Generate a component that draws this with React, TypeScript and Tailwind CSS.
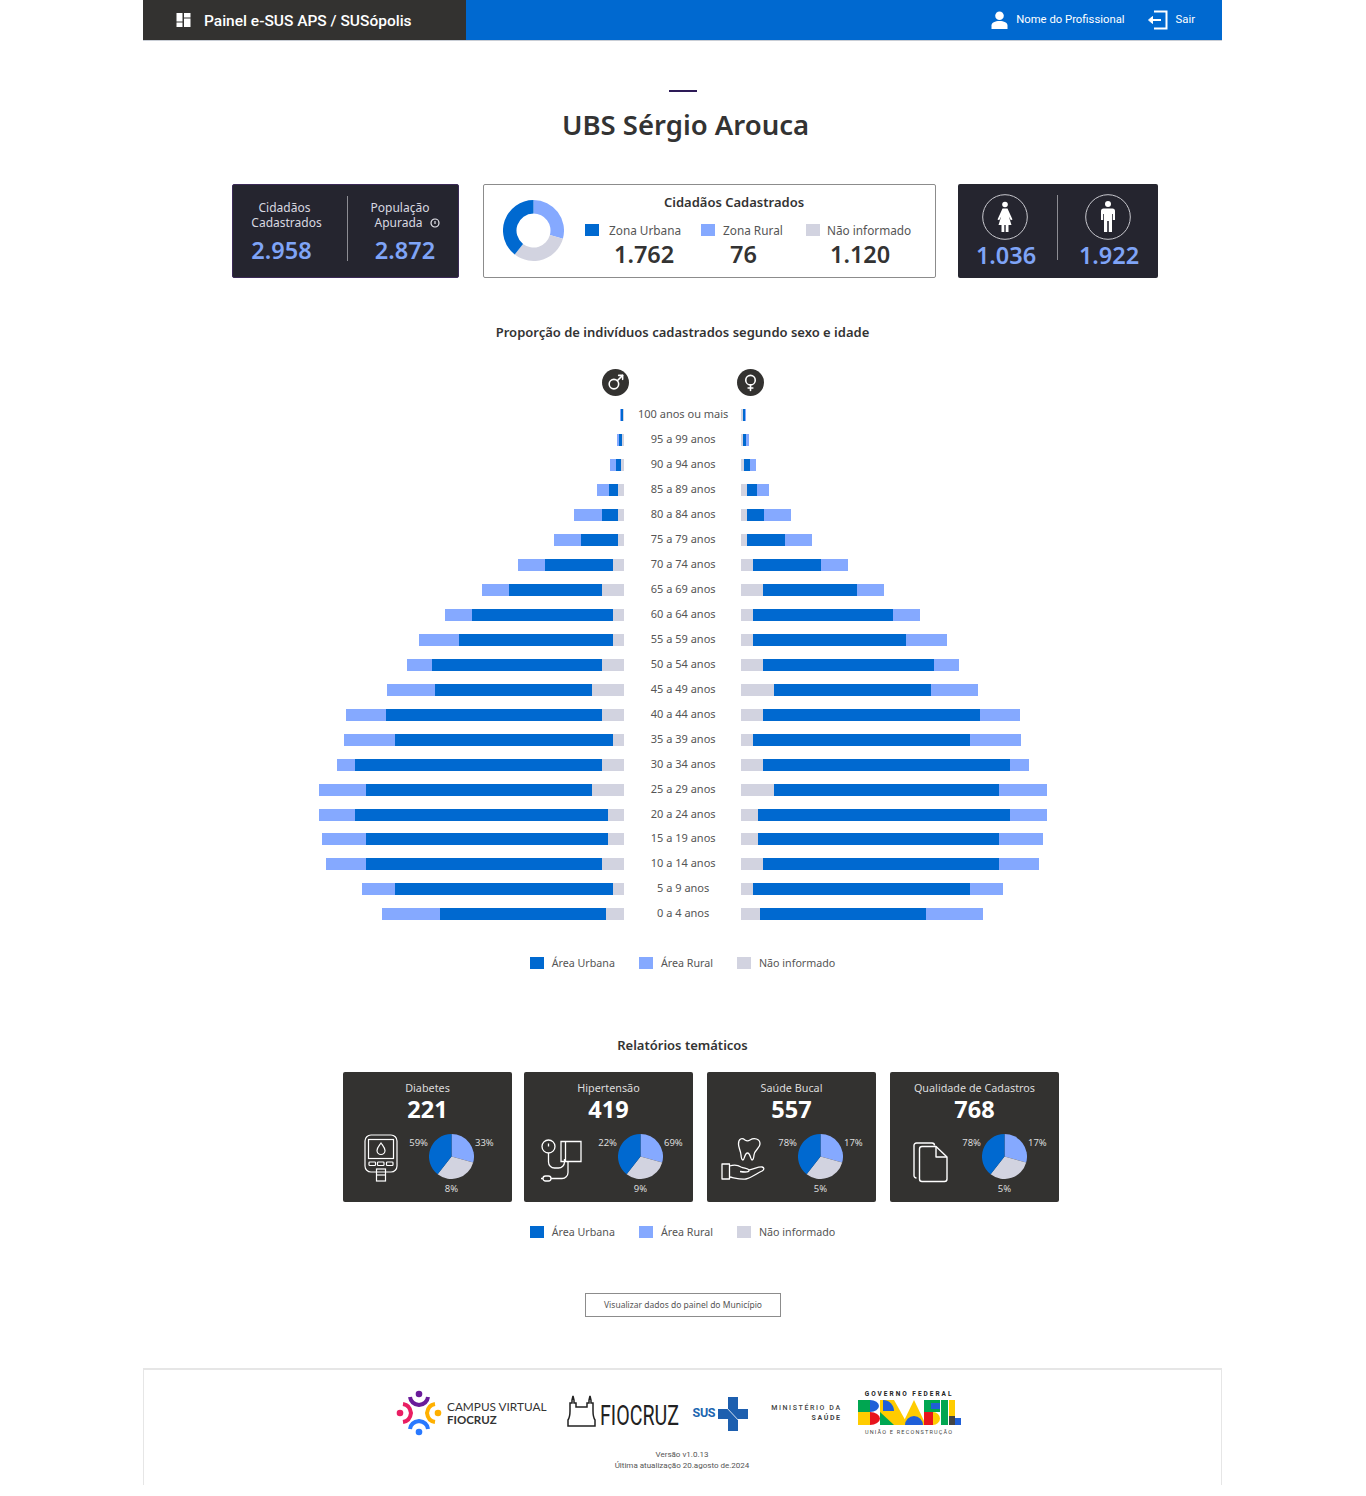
import { Mars, Venus } from "lucide-react";

// largura em px de cada faixa. m: [rural, urbana, não informado] / f: [não informado, urbana, rural]
const faixas: { label: string; m: number[]; f: number[] }[] = [
  { label: "100 anos ou mais", m: [0.7, 1.7, 1.7], f: [1.7, 2, 1] },
  { label: "95 a 99 anos", m: [2.7, 3, 2], f: [2, 3, 3] },
  { label: "90 a 94 anos", m: [6, 5.3, 3], f: [3.3, 5.3, 6] },
  { label: "85 a 89 anos", m: [11.7, 9.7, 6], f: [6, 10, 11.7] },
  { label: "80 a 84 anos", m: [27.3, 16.7, 6], f: [6, 17, 27] },
  { label: "75 a 79 anos", m: [26.7, 37.7, 6], f: [6, 38, 27] },
  { label: "70 a 74 anos", m: [27, 67.7, 11.7], f: [11.7, 68.3, 27] },
  { label: "65 a 69 anos", m: [27, 93.3, 22], f: [22.3, 93.7, 26.7] },
  { label: "60 a 64 anos", m: [27, 140.3, 11.7], f: [11.7, 140.7, 27] },
  { label: "55 a 59 anos", m: [40.3, 153.3, 11.7], f: [11.7, 153.7, 40.3] },
  { label: "50 a 54 anos", m: [24.7, 170.7, 22], f: [22.3, 170.7, 24.7] },
  { label: "45 a 49 anos", m: [47.7, 156.7, 32.7], f: [33, 157, 47.3] },
  { label: "40 a 44 anos", m: [40, 216.3, 22], f: [22.3, 216.7, 39.7] },
  { label: "35 a 39 anos", m: [51.3, 217.3, 11.7], f: [11.7, 217.7, 51] },
  { label: "30 a 34 anos", m: [18.3, 247, 22], f: [22.3, 246.7, 18.7] },
  { label: "25 a 29 anos", m: [47.3, 225.3, 32.7], f: [33, 225.3, 47.3] },
  { label: "20 a 24 anos", m: [36.3, 252.3, 16.7], f: [16.7, 252.3, 36.7] },
  { label: "15 a 19 anos", m: [44, 241.3, 16.7], f: [16.7, 241.7, 44] },
  { label: "10 a 14 anos", m: [40, 236, 22], f: [22.3, 236, 40] },
  { label: "5 a 9 anos", m: [33.3, 217.3, 11.7], f: [11.7, 217.7, 33] },
  { label: "0 a 4 anos", m: [57.7, 165.7, 18.7], f: [19, 165.7, 57.7] },
];

function polar(r: number, deg: number) {
  const a = ((deg - 90) * Math.PI) / 180;
  return `${(r * Math.cos(a)).toFixed(2)} ${(r * Math.sin(a)).toFixed(2)}`;
}

function Pie({ size, hole = 0 }: { size: number; hole?: number }) {
  const r = size / 2;
  const fatias = [
    { de: 0, ate: 105.5, cor: "#85A9FF" },
    { de: 105.5, ate: 218, cor: "#D2D3E0" },
    { de: 218, ate: 360, cor: "#0069D0" },
  ];
  return (
    <svg width={size} height={size} viewBox={`${-r} ${-r} ${size} ${size}`} className="block shrink-0">
      {fatias.map((s) => (
        <path
          key={s.de}
          fill={s.cor}
          d={
            hole
              ? `M${polar(r, s.de)} A${r} ${r} 0 ${s.ate - s.de > 180 ? 1 : 0} 1 ${polar(r, s.ate)} L${polar(hole, s.ate)} A${hole} ${hole} 0 0 0 ${polar(hole, s.de)} Z`
              : `M0 0 L${polar(r, s.de)} A${r} ${r} 0 0 1 ${polar(r, s.ate)} Z`
          }
        />
      ))}
    </svg>
  );
}

function Legenda({ className }: { className: string }) {
  return (
    <div className={`flex justify-center gap-6 text-[10.7px] leading-4 text-[#555] ${className}`}>
      <span className="flex items-center gap-2">
        <i className="block w-[14px] h-3 bg-[#0069D0]" />
        Área Urbana
      </span>
      <span className="flex items-center gap-2">
        <i className="block w-[14px] h-3 bg-[#85A9FF]" />
        Área Rural
      </span>
      <span className="flex items-center gap-2">
        <i className="block w-[14px] h-3 bg-[#D2D3E0]" />
        Não informado
      </span>
    </div>
  );
}

function IconeGlicosimetro() {
  return (
    <svg width="34" height="48" viewBox="0 0 34 48" fill="none" stroke="#fff" strokeWidth="1.2">
      <rect x="1" y="1" width="32" height="37" rx="6" />
      <rect x="4.5" y="5.5" width="25" height="19" />
      <path d="M17 9 C14.5 12.5 13 14 13 16.5 a4 4 0 0 0 8 0 C21 14 19.5 12.5 17 9Z" />
      <rect x="5" y="28" width="6.5" height="3.5" rx="0.8" />
      <rect x="13.5" y="28" width="6.5" height="3.5" rx="0.8" />
      <rect x="22.5" y="28" width="6.5" height="3.5" rx="0.8" />
      <rect x="12.5" y="35" width="9" height="12" />
      <path d="M12.5 41 h9" />
    </svg>
  );
}

function IconeTensiometro() {
  return (
    <svg width="41" height="43" viewBox="0 0 41 43" fill="none" stroke="#fff" strokeWidth="1.3">
      <circle cx="7.5" cy="7.5" r="6.5" />
      <path d="M7.5 4.5 v3" />
      <path d="M7.5 14 v9 a6 6 0 0 0 6 6 h4 a6 6 0 0 0 6 -6 v-3" />
      <path d="M20 2.5 h20 v20 h-20 Z M24.5 2.5 v20" />
      <path d="M27 22.5 v11 a6 6 0 0 1 -6 6 h-11" />
      <rect x="2" y="37" width="8" height="5" rx="2.5" />
      <path d="M0 39.5 h2" />
    </svg>
  );
}

function IconeDente() {
  return (
    <svg width="44" height="46" viewBox="0 0 44 46" fill="none" stroke="#fff" strokeWidth="1.3" strokeLinejoin="round">
      <path d="M24 3 C21 0.5 17.5 1.5 17.5 7 C17.5 11 19.5 13 20 18 C20.3 22 21 23 22 23 C23.5 23 23.5 16 26.5 16 C29.5 16 29.5 23 31 23 C32 23 32.7 22 33 18 C33.5 13 39 11 39 7 C39 1.5 33 0.5 29 3 C27.5 4 25.5 4 24 3Z" />
      <path d="M1 27 h7.5 v15 h-7.5 Z" />
      <path d="M8.5 29 C14 27 17 28 20 30 C23 31.5 27 31 28 33 C28.5 35 25 35.5 19 34.5 M28 33 C33 32 38 29.5 41 30 C43.5 30.5 43.5 32.5 41 34 C35 37 30 41 25 42 C20 43 14 41 8.5 40" />
    </svg>
  );
}

function IconeDocumentos() {
  return (
    <svg width="35" height="41" viewBox="0 0 35 41" fill="none" stroke="#fff" strokeWidth="1.4" strokeLinejoin="round">
      <path d="M3.5 36 C2 36 1 35 1 33.5 V3.5 C1 2 2 1 3.5 1 H19 C20.5 1 21.5 2 21.5 3.5" />
      <path d="M6.5 7 C6.5 5.5 7.5 4.5 9 4.5 H23 L34 15 V37 C34 38.5 33 39.5 31.5 39.5 H9 C7.5 39.5 6.5 38.5 6.5 37Z" />
      <path d="M23 4.5 V15 H34" />
    </svg>
  );
}

const relatorios = [
  { titulo: "Diabetes", total: "221", p: ["59%", "33%", "8%"], icone: <IconeGlicosimetro />, box: "w-[86px] pl-[21px]", card: "" },
  { titulo: "Hipertensão", total: "419", p: ["22%", "69%", "9%"], icone: <IconeTensiometro />, box: "w-[94px] pl-[17px] pt-[5px]", card: "ml-[12px]" },
  { titulo: "Saúde Bucal", total: "557", p: ["78%", "17%", "5%"], icone: <IconeDente />, box: "w-[91px] pl-[14px] pt-[3px]", card: "ml-[14px]" },
  { titulo: "Qualidade de Cadastros", total: "768", p: ["78%", "17%", "5%"], icone: <IconeDocumentos />, box: "w-[92px] pl-[23px] pt-[8px]", card: "ml-[14px]" },
];

export default function App() {
  return (
    <div className="min-h-[1496px] bg-white font-['Noto_Sans',sans-serif] text-[#333]">
      <div className="w-[1079px] ml-[143px]">
        {/* Header */}
        <header className="flex h-10 shadow-[0_1px_0_#c9ced6] font-['Roboto',sans-serif]">
          <div className="flex items-center w-[323px] bg-[#333230] pl-[33px] text-white">
            <svg width="15" height="15" viewBox="0 0 15 15" fill="#fff" className="mr-[13px] mt-[1px]">
              <rect x="0.5" y="0" width="6" height="8.5" />
              <rect x="0.5" y="9.5" width="6" height="4.5" />
              <rect x="8" y="0" width="6.5" height="4.5" />
              <rect x="8" y="5.5" width="6.5" height="8.5" />
            </svg>
            <span className="pt-[3px] text-[15.5px] font-medium leading-none">Painel e-SUS APS / SUSópolis</span>
          </div>
          <div className="flex flex-1 items-center justify-end bg-[#0069D0] pr-[27px] text-white text-[11.3px]">
            <svg width="17" height="18" viewBox="0 0 17 18" fill="#fff" className="mr-[8px]">
              <circle cx="8.5" cy="4.8" r="4.3" />
              <path d="M0.5 18 V14.5 C0.5 11.5 4 10 8.5 10 C13 10 16.5 11.5 16.5 14.5 V18 Z" />
            </svg>
            <span className="pt-[1px]">Nome do Profissional</span>
            <svg width="21" height="20" viewBox="0 0 21 20" fill="none" stroke="#fff" strokeWidth="2" className="ml-[22px] mr-[8px]">
              <path d="M7 1.5 H19.5 V18.5 H7" />
              <path d="M14 10 H3" />
              <path d="M5.5 6.5 L1.5 10 L5.5 13.5 Z" fill="#fff" strokeWidth="1" />
            </svg>
            <span className="pt-[1px]">Sair</span>
          </div>
        </header>

        {/* Titulo */}
        <div className="mt-[50px] ml-[526px] w-[28px] h-[2px] bg-[#2D1A57]" />
        <h1 className="mt-[15px] text-center text-[27.5px] leading-9 font-semibold ml-[6px]">UBS Sérgio Arouca</h1>

        {/* Indicadores */}
        <section className="flex mt-[41px] ml-[89px] h-[94px]">
          <div className="flex w-[227px] rounded-[2px] border border-[#3b2a57] bg-[#25252F] text-[#d8d8e0] pt-[11px]">
            <div className="w-[114px] pr-[7px] pt-[4px] text-[12px] leading-[15px] text-center">
              <p className="pr-[4px]">Cidadãos</p>
              <p>Cadastrados</p>
              <p className="mt-[4px] text-[23.5px] leading-8 font-semibold text-[#7FA4F7] pr-[10px]">2.958</p>
            </div>
            <div className="w-px h-[65px] bg-[#8d8d93]" />
            <div className="flex-1 pt-[4px] text-[12px] leading-[15px] text-center pr-[6px]">
              <p>População</p>
              <p className="flex items-center justify-center pl-[14px]">
                Apurada
                <svg width="10" height="10" viewBox="0 0 10 10" fill="none" stroke="#e8e8ee" className="ml-[7px]">
                  <circle cx="5" cy="5" r="4" strokeWidth="1.2" />
                  <path d="M5 3 v3" strokeWidth="1.2" />
                </svg>
              </p>
              <p className="mt-[4px] text-[23.5px] leading-8 font-semibold text-[#7FA4F7] pl-[10px]">2.872</p>
            </div>
          </div>

          <div className="flex ml-[24px] w-[453px] rounded-[2px] border border-[#8c8c8c] pl-[19px]">
            <div className="mt-[15px]">
              <Pie size={61} hole={17} />
            </div>
            <div className="ml-[21px] flex-1">
              <p className="mt-[8px] text-center text-[13px] leading-[18px] font-semibold pr-[52px]">Cidadãos Cadastrados</p>
              <div className="flex mt-[10px] text-[11.8px] leading-[18px] text-[#555]">
                <div className="w-[116px]">
                  <p className="flex items-center gap-[10px]"><i className="block w-[14px] h-3 bg-[#0069D0]" />Zona Urbana</p>
                  <p className="mt-[-1px] pl-[29px] text-[23.5px] leading-8 font-semibold text-[#333]">1.762</p>
                </div>
                <div className="w-[105px]">
                  <p className="flex items-center gap-[8px]"><i className="block w-[14px] h-3 bg-[#85A9FF]" />Zona Rural</p>
                  <p className="mt-[-1px] pl-[29px] text-[23.5px] leading-8 font-semibold text-[#333]">76</p>
                </div>
                <div>
                  <p className="flex items-center gap-[7px]"><i className="block w-[14px] h-3 bg-[#D2D3E0]" />Não informado</p>
                  <p className="mt-[-1px] pl-[24px] text-[23.5px] leading-8 font-semibold text-[#333]">1.120</p>
                </div>
              </div>
            </div>
          </div>

          <div className="flex ml-[22px] w-[200px] rounded-[2px] bg-[#25252F] pt-[10px]">
            <div className="flex flex-col items-center w-[101px] pr-[5px]">
              <svg width="46" height="46" viewBox="-23 -23 46 46" className="shrink-0">
                <circle r="22.3" fill="none" stroke="#c9c9cf" strokeWidth="1" />
                <circle cy="-12.5" r="2.8" fill="#fff" />
                <path d="M-2.5 -8.5 H2.5 L7.5 2.5 L5.8 3.2 L3.8 -0.5 L6.5 8 H3.5 V15 H0.7 V8 H-0.7 V15 H-3.5 V8 H-6.5 L-3.8 -0.5 L-5.8 3.2 L-7.5 2.5 Z" fill="#fff" />
              </svg>
              <p className="mt-[-1px] ml-[2px] text-[23.5px] leading-8 font-semibold text-[#7FA4F7]">1.036</p>
            </div>
            <div className="mt-[1px] w-px h-[65px] bg-[#8d8d93]" />
            <div className="flex flex-col items-center w-[102px]">
              <svg width="46" height="46" viewBox="-23 -23 46 46" className="shrink-0">
                <circle r="22.3" fill="none" stroke="#c9c9cf" strokeWidth="1" />
                <circle cy="-13" r="3" fill="#fff" />
                <path d="M-4.5 -8.5 H4.5 Q7 -8.5 7 -6 V3 H4.8 V-3 H4 V15 H0.8 V4 H-0.8 V15 H-4 V-3 H-4.8 V3 H-7 V-6 Q-7 -8.5 -4.5 -8.5 Z" fill="#fff" />
              </svg>
              <p className="mt-[-1px] ml-[2px] text-[23.5px] leading-8 font-semibold text-[#7FA4F7]">1.922</p>
            </div>
          </div>
        </section>

        {/* Piramide */}
        <h2 className="mt-[45px] text-center text-[13px] leading-[18px] font-semibold">Proporção de indivíduos cadastrados segundo sexo e idade</h2>
        <div className="flex mt-[28px] ml-[459px]">
          <span className="flex items-center justify-center w-[27px] h-[27px] rounded-full bg-[#333230] text-white">
            <Mars size={19} strokeWidth={2} />
          </span>
          <span className="flex items-center justify-center ml-[108px] w-[27px] h-[27px] rounded-full bg-[#333230] text-white">
            <Venus size={19} strokeWidth={2} />
          </span>
        </div>
        <div className="mt-[6px] ml-[175px]">
          {faixas.map((f) => (
            <div key={f.label} className="flex h-[24.97px]">
              <div className="flex justify-end w-[306.4px] pt-[7px]">
                <i className="block h-3 bg-[#85A9FF]" style={{ width: f.m[0] }} />
                <i className="block h-3 bg-[#0069D0]" style={{ width: f.m[1] }} />
                <i className="block h-3 bg-[#D2D3E0]" style={{ width: f.m[2] }} />
              </div>
              <div className="w-[116.6px] pl-[1px] text-center text-[11px] leading-[24px] text-[#555] whitespace-nowrap">{f.label}</div>
              <div className="flex pt-[7px]">
                <i className="block h-3 bg-[#D2D3E0]" style={{ width: f.f[0] }} />
                <i className="block h-3 bg-[#0069D0]" style={{ width: f.f[1] }} />
                <i className="block h-3 bg-[#85A9FF]" style={{ width: f.f[2] }} />
              </div>
            </div>
          ))}
        </div>
        <Legenda className="mt-[28.6px]" />

        {/* Relatorios */}
        <h2 className="mt-[65px] text-center text-[13px] leading-[18px] font-semibold">Relatórios temáticos</h2>
        <div className="flex mt-[18px] ml-[200px]">
          {relatorios.map((r) => (
            <div key={r.titulo} className={`w-[169px] h-[130px] rounded-[2px] bg-[#333230] text-center text-white ${r.card}`}>
              <p className="mt-[8px] text-[10.8px] leading-[15px] text-[#dcdcdc]">{r.titulo}</p>
              <p className="text-[23.5px] leading-[29px] font-bold">{r.total}</p>
              <div className="flex mt-[10px]">
                <div className={`shrink-0 text-left ${r.box}`}>{r.icone}</div>
                <div className="relative">
                  <Pie size={45} />
                  <span className="absolute right-[46px] top-[3px] text-[9.5px] leading-3 text-[#dcdcdc]">{r.p[0]}</span>
                  <span className="absolute left-[46px] top-[3px] text-[9.5px] leading-3 text-[#dcdcdc]">{r.p[1]}</span>
                  <span className="absolute left-0 w-[45px] top-[49px] text-[9.5px] leading-3 text-[#dcdcdc]">{r.p[2]}</span>
                </div>
              </div>
            </div>
          ))}
        </div>
        <Legenda className="mt-[22px]" />

        <button className="block mt-[53px] ml-[442px] w-[196px] h-6 border border-[#8c8c8c] pt-[1px] text-[8.5px] text-[#555]">
          Visualizar dados do painel do Município
        </button>

        {/* Rodape */}
        <footer className="mt-[51px] h-[117px] border-x border-t-2 border-[#e6e6e6] font-['Roboto',sans-serif]">
          <div className="flex items-center h-[50px] mt-[18px] ml-[252px]">
            <svg width="46" height="46" viewBox="0 0 46 46" fill="none" strokeWidth="4" className="block shrink-0">
              <circle cx="23" cy="4" r="3.3" fill="#6A1B9A" />
              <path d="M14 7 Q15 14 23 15 Q31 14 32 7" stroke="#6A1B9A" />
              <circle cx="42" cy="23" r="3.3" fill="#FFB000" />
              <path d="M39 14 Q32 15 31 23 Q32 31 39 32" stroke="#FFB000" />
              <circle cx="23" cy="42" r="3.3" fill="#2979FF" />
              <path d="M14 39 Q15 32 23 31 Q31 32 32 39" stroke="#2979FF" />
              <circle cx="4" cy="23" r="3.3" fill="#E91E63" />
              <path d="M7 14 Q14 15 15 23 Q14 31 7 32" stroke="#E91E63" />
            </svg>
            <div className="ml-[5px] mt-[1px] text-[#333] font-['Lato',sans-serif]">
              <p className="text-[11.8px] leading-[13px] whitespace-nowrap">CAMPUS VIRTUAL</p>
              <p className="text-[11.5px] leading-[13px] font-bold">FIOCRUZ</p>
            </div>
            <svg width="30" height="36" viewBox="0 0 30 36" className="ml-[21px] block shrink-0">
              <path
                d="M1 31 H28 V25 Q26 22 26 16 V8 H24 V5 L23 1 L22 5 V8 H20 V12 H9 V8 H7 V5 L6 1 L5 5 V8 H3 V16 Q3 22 1 25 Z"
                fill="none"
                stroke="#222"
                strokeWidth="1.5"
              />
            </svg>
            <span className="block w-[79px] ml-[3px] mt-[7px] origin-left scale-x-[0.7] text-[28px] leading-none whitespace-nowrap text-[#222]">FIOCRUZ</span>
            <span className="ml-[13px] text-[12.5px] font-bold tracking-[-0.3px] text-[#1D66B0]">SUS</span>
            <svg width="30" height="34" viewBox="0 0 30 34" className="ml-[3px] mt-[2px] block shrink-0">
              <path d="M10 0 H20 V12 H30 V22 H20 V34 H10 V22 H0 V12 H10 Z" fill="#1D5FAF" />
              <path d="M8 10 L22 25" stroke="#fff" strokeWidth="0.8" />
            </svg>
            <div className="ml-[23px] text-right text-[7px] leading-[10px] tracking-[1.6px] text-[#444] font-medium whitespace-nowrap">
              <p>MINISTÉRIO DA</p>
              <p className="font-bold">SAÚDE</p>
            </div>
            <div className="ml-[16px] mt-[1px] flex flex-col items-center w-[103px] shrink-0">
              <p className="text-[6.5px] leading-[9px] font-bold tracking-[2px] text-[#222] whitespace-nowrap">GOVERNO FEDERAL</p>
              <svg width="103" height="25" viewBox="0 0 103 25" className="block mt-[1px] mb-[3px]">
                <rect x="0" y="0" width="12" height="12" fill="#00A651" />
                <rect x="0" y="12" width="12" height="13" fill="#FFCC00" />
                <path d="M12 0 A9 6 0 0 1 12 12 Z" fill="#1F5FD8" />
                <path d="M12 12 A10 6.5 0 0 1 12 25 Z" fill="#E8141C" />
                <path d="M22 0 H36 L50 25 H22 Z" fill="#FFCC00" />
                <path d="M22 12 L36 25 H22 Z" fill="#00A651" />
                <path d="M25 0 A11 11 0 0 1 36 11 H25 Z" fill="#1F5FD8" />
                <path d="M44 25 L56 0 L68 25 Z" fill="#FFCC00" />
                <path d="M47 25 A9 9 0 0 1 65 25 Z" fill="#1F5FD8" />
                <path d="M66 0 H82 V12 H66 Z" fill="#00A651" />
                <rect x="73" y="3" width="9" height="6" fill="#1F5FD8" />
                <path d="M66 12 H75 V25 H66 Z" fill="#E8141C" />
                <path d="M75 12 A7 6.5 0 0 1 75 25 Z" fill="#FFCC00" />
                <rect x="83" y="0" width="7" height="25" fill="#00A651" />
                <rect x="91" y="0" width="6" height="25" fill="#FFCC00" />
                <rect x="91" y="16" width="6" height="9" fill="#444" />
                <rect x="97" y="18" width="6" height="7" fill="#1F5FD8" />
              </svg>
              <p className="text-[5.5px] leading-[8px] tracking-[1.2px] text-[#444] whitespace-nowrap">UNIÃO E RECONSTRUÇÃO</p>
            </div>
          </div>
          <div className="mt-[11px] text-center text-[8px] leading-[11px] text-[#555] pr-[1px]">
            <p>Versão v1.0.13</p>
            <p>Última atualização 20.agosto de.2024</p>
          </div>
        </footer>
      </div>
    </div>
  );
}
